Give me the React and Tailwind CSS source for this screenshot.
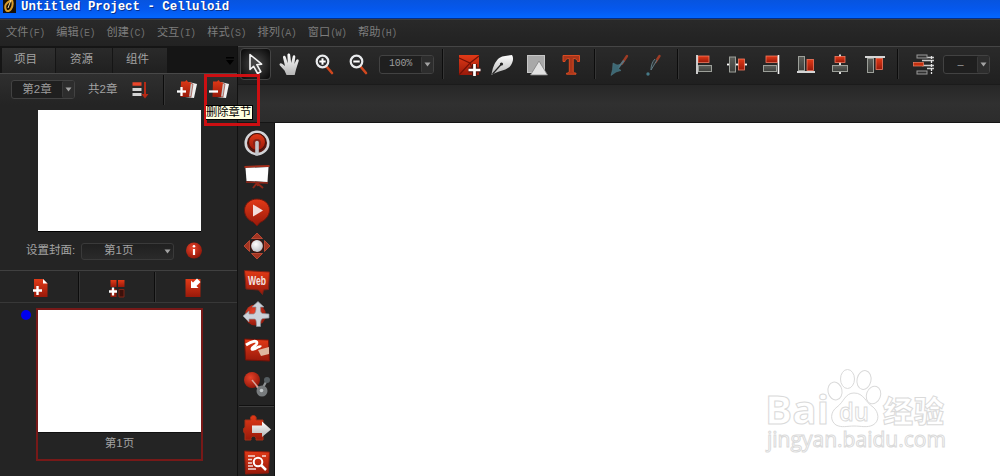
const menus = [
  ['文件', '(F)'],
  ['编辑', '(E)'],
  ['创建', '(C)'],
  ['交互', '(I)'],
  ['样式', '(S)'],
  ['排列', '(A)'],
  ['窗口', '(W)'],
  ['帮助', '(H)'],
];

function Defs() {
  return (
    <svg width="0" height="0" className="absolute">
      <defs>
        <linearGradient id="red" x1="0" y1="0" x2="0" y2="1">
          <stop offset="0" stopColor="#e23a17" />
          <stop offset="1" stopColor="#98190a" />
        </linearGradient>
        <linearGradient id="silver" x1="0" y1="0" x2="0" y2="1">
          <stop offset="0" stopColor="#ffffff" />
          <stop offset="1" stopColor="#b5b5b5" />
        </linearGradient>
        <linearGradient id="gray" x1="0" y1="0" x2="0" y2="1">
          <stop offset="0" stopColor="#5c5e5a" />
          <stop offset="1" stopColor="#3d3f3c" />
        </linearGradient>
        <radialGradient id="ball" cx=".4" cy=".35" r=".7">
          <stop offset="0" stopColor="#e8432a" />
          <stop offset="1" stopColor="#8d1508" />
        </radialGradient>
        <radialGradient id="pearl" cx=".4" cy=".35" r=".7">
          <stop offset="0" stopColor="#ffffff" />
          <stop offset="1" stopColor="#b9bec4" />
        </radialGradient>
      </defs>
    </svg>
  );
}

// every toolbar icon lives on a 34x34 grid
function Icon({ children }) {
  return (
    <svg width="34" height="34" viewBox="0 0 34 34" fill="none" className="shrink-0">
      {children}
    </svg>
  );
}

function SmallIcon({ children }) {
  return (
    <svg width="22" height="22" viewBox="0 0 22 22" fill="none" className="shrink-0">
      {children}
    </svg>
  );
}

function Separator() {
  return <div className="h-[30px] w-[2px] shrink-0 border-l border-[#0c0c0c] bg-[#353535]" />;
}

function Arrow() {
  return (
    <svg width="7" height="5" viewBox="0 0 7 5">
      <path d="M.5 .5h6l-3 4z" fill="#a3a3a3" />
    </svg>
  );
}

function Select({ className, children }) {
  return (
    <div className={`flex shrink-0 items-stretch rounded-[3px] border border-[#424242] bg-[#1f1f1f] leading-none text-[#9c9c9c] ${className}`}>
      <span className="flex flex-1 items-center justify-center">{children}</span>
      <span className="flex w-[12px] items-center justify-center rounded-[2px] border-l border-[#3a3a3a] bg-[#2d2d2d]">
        <Arrow />
      </span>
    </div>
  );
}

function MagnifierIcon({ plus }) {
  return (
    <Icon>
      <path d="M19.5 19.5l5.5 6.5" stroke="#d0471e" strokeWidth="2.6" strokeLinecap="round" />
      <circle cx="15.5" cy="14.5" r="5.8" fill="#29292a" stroke="#e9ebed" strokeWidth="2.2" />
      <path d="M12.3 14.5h6.4" stroke="#fff" strokeWidth="2" />
      {plus && <path d="M15.5 11.3v6.4" stroke="#fff" strokeWidth="2" />}
    </Icon>
  );
}

function Toolbar() {
  return (
    <div className="flex h-[38px] items-center border-t border-[#454545] bg-linear-to-b from-[#2a2a2a] to-[#202020] pb-[3px] pl-[2px]">
      <div className="flex h-[32px] w-[31px] shrink-0 items-center justify-center rounded-[4px] border border-[#444] bg-radial from-[#4b4b4b] to-[#080808]">
        <svg width="29" height="30" viewBox="0 0 29 30" fill="none">
          <path d="M9 5.5v15l3.6-3.2 4 7.2 3.2-1.8-4-7 4.8-.6z" fill="#454545" stroke="#f5f5f5" strokeWidth="1.6" strokeLinejoin="round" />
        </svg>
      </div>
      <div className="w-[2px] shrink-0" />
      <Icon>
        <path d="M13.5 28l-2-4.5-4.6-5c-1.3-1.8.8-3 2.3-1.7l2.8 2.2-2-8.5c-.2-2 2.1-2.3 2.7-.5l2.1 6.3-.4-8.3c.1-2 2.6-2 2.8 0l1 8 1.5-6.5c.6-1.8 2.7-1.3 2.6.5l-.9 7 1.9-4c1-1.5 2.800-.6 2.400 1l-2.700 8.500-1.300 5.500z" fill="url(#silver)" />
      </Icon>
      <MagnifierIcon plus />
      <MagnifierIcon />
      <Select className="ml-[4px] h-[19px] w-[55px] font-['Liberation_Mono'] text-[10px] tracking-[-0.300px]">100%</Select>
      <div className="w-[8px] shrink-0" />
      <Separator />
      <div className="w-[8px] shrink-0" />
      <Icon>
        <rect x="7" y="8" width="20" height="20" fill="url(#red)" />
        <path d="M7 11l11 5 9-7M7 28l11-12 5 12" stroke="#741006" strokeWidth="1.2" />
        <path d="M22.5 17v12M16.5 23h12" stroke="#4a1510" strokeWidth="5" />
        <path d="M22.5 17v12M16.5 23h12" stroke="#fff" strokeWidth="2.7" />
      </Icon>
      <Icon>
        <path d="M5.5 28c1-6 2-11 6.5-16 4-3.400 9-3 14-4 2 3 1.200 8-2.500 12C18.500 24 11 24 5.500 28z" fill="url(#silver)" />
        <path d="M6.5 27l9-10" stroke="#222" strokeWidth="1.2" />
        <circle cx="15.5" cy="17" r="1.6" fill="#222" />
      </Icon>
      <Icon>
        <rect x="7.5" y="8.5" width="17" height="17" fill="#a9a9a9" stroke="#c6c6c6" />
        <path d="M19 14l8.5 14h-17z" fill="#e2e2e2" stroke="#808080" strokeWidth=".8" />
      </Icon>
      <Icon>
        <path d="M9 8.5h16.5v6h-2c-.4-2-1.3-3-4.3-3V24c0 1.5.8 2 2.8 2.2v1h-9.5v-1c2-.2 2.8-.7 2.8-2.2V11.5c-3 0-3.9 1-4.3 3H9z" fill="#a9351a" stroke="#d94b22" />
      </Icon>
      <div className="w-[6px] shrink-0" />
      <Separator />
      <div className="w-[7px] shrink-0" />
      <Icon>
        <path d="M19 16.5l5-7.5" stroke="#9f3c25" strokeWidth="2.4" strokeLinecap="round" />
        <path d="M15 21l6-7.5" stroke="#557884" strokeWidth="2" />
        <path d="M10 16l4 2 3-.5-1.5 4 2.5 2-5 1.5-5 3.5 1.5-6z" fill="#3d6874" stroke="#527f8b" strokeWidth=".5" />
      </Icon>
      <Icon>
        <path d="M18.5 15l4-6" stroke="#9f3c25" strokeWidth="2.4" strokeLinecap="round" />
        <path d="M20 13l-6 10c0-4 1-8 4-11" fill="#2e3335" stroke="#67828b" strokeWidth=".9" />
        <circle cx="11" cy="27" r="1.7" fill="#467987" />
      </Icon>
      <div className="w-[6px] shrink-0" />
      <Separator />
      <div className="w-[8px] shrink-0" />
      <Icon>
        <rect x="11" y="9" width="11" height="6.5" fill="url(#red)" stroke="#f07a61" strokeWidth=".8" />
        <rect x="11.5" y="18.5" width="13" height="6" fill="url(#gray)" stroke="#9c9f99" />
        <path d="M10 8v19" stroke="#f6f6f6" strokeWidth="1.6" />
      </Icon>
      <Icon>
        <path d="M6 17.5h20" stroke="#fff" strokeWidth="1.8" />
        <rect x="8.5" y="10" width="6" height="15" fill="url(#gray)" stroke="#9c9f99" />
        <rect x="17.5" y="12" width="6" height="11" fill="url(#red)" stroke="#f07a61" strokeWidth=".8" />
      </Icon>
      <Icon>
        <rect x="11" y="9" width="11.5" height="6.5" fill="url(#red)" stroke="#f07a61" strokeWidth=".8" />
        <rect x="8.5" y="18.5" width="13" height="6" fill="url(#gray)" stroke="#9c9f99" />
        <path d="M23.5 8v19" stroke="#f6f6f6" strokeWidth="1.6" />
      </Icon>
      <Icon>
        <rect x="9.5" y="9.5" width="6" height="14" fill="url(#gray)" stroke="#9c9f99" />
        <rect x="18" y="12.5" width="6.5" height="11" fill="url(#red)" stroke="#f07a61" strokeWidth=".8" />
        <path d="M8 25h18" stroke="#f6f6f6" strokeWidth="1.7" />
      </Icon>
      <Icon>
        <path d="M17 7.5V27" stroke="#fff" strokeWidth="1.7" />
        <rect x="12" y="9.5" width="10" height="6" fill="url(#red)" stroke="#f07a61" strokeWidth=".8" />
        <rect x="9.5" y="18.5" width="15" height="6" fill="url(#gray)" stroke="#9c9f99" />
      </Icon>
      <Icon>
        <rect x="10.5" y="11.5" width="6" height="14" fill="url(#gray)" stroke="#9c9f99" />
        <rect x="19" y="11.5" width="6.5" height="11" fill="url(#red)" stroke="#f07a61" strokeWidth=".8" />
        <path d="M8 10h20" stroke="#f6f6f6" strokeWidth="1.7" />
      </Icon>
      <div className="w-[6px] shrink-0" />
      <Separator />
      <div className="w-[8px] shrink-0" />
      <Icon>
        <path d="M20 10.5h7M15 13.5h12M20 21.5h7M15 18.5h12" stroke="#c9c9c9" strokeWidth="1.3" />
        <path d="M24.5 9v18" stroke="#e6e6e6" strokeDasharray="3 1" strokeWidth="1.3" />
        <rect x="10" y="8" width="10" height="3" fill="#303030" stroke="#9a9a9a" />
        <rect x="6.5" y="15.5" width="10" height="3.5" fill="#c5300f" stroke="#ef8066" strokeWidth=".7" />
        <rect x="10" y="24" width="10" height="3" fill="#303030" stroke="#9a9a9a" />
      </Icon>
      <Select className="ml-[2px] h-[19px] w-[47px] font-['Liberation_Sans'] text-[11px]">–</Select>
    </div>
  );
}

function ToolStrip() {
  return (
    <div className="flex h-[353px] w-[37px] shrink-0 flex-col items-center overflow-hidden border-r border-[#111] bg-[#232323] pt-[3px] pl-px">
      <div className="flex h-[275px] shrink-0 flex-col justify-between">
        <Icon>
          <circle cx="17" cy="17" r="11.3" fill="#5a1a12" stroke="#d3d5d8" strokeWidth="2.5" />
          <circle cx="17" cy="16" r="8.5" fill="url(#red)" stroke="#401009" />
          <circle cx="17" cy="17" r="4" fill="#8b2316" />
          <path d="M17 16.5V28" stroke="#c3c6ca" strokeWidth="3.6" strokeLinecap="round" />
        </Icon>
        <Icon>
          <path d="M4.5 7l25-1" stroke="#a62f1c" strokeWidth="2" />
          <path d="M5.5 8l23-1-1 15-21-1z" fill="#fff" />
          <path d="M6 22l22 1" stroke="#94291b" strokeWidth="1.6" />
          <path d="M17 23l-4 5M17 23l6 5M17 23l1 3" stroke="#8f2819" strokeWidth="2" />
        </Icon>
        <Icon>
          <path d="M17 4c7 0 12.5 4.5 12.5 11S24 26 20 27.5L17 31l-4-4C8 25 4.5 21 4.5 15S10 4 17 4z" fill="url(#red)" stroke="#6f170d" />
          <path d="M13 9.5l10 6-10 6z" fill="#f2dedb" />
        </Icon>
        <Icon>
          <path d="M17 4l5.5 5.5h-11zM17 30l5.5-5.5h-11zM4 17l5.5-5.5v11zM30 17l-5.5-5.5v11z" fill="#a23421" stroke="#cb5139" strokeWidth=".8" />
          <circle cx="17" cy="17" r="7" fill="#45100a" />
          <circle cx="17" cy="17" r="5.9" fill="url(#pearl)" />
        </Icon>
        <Icon>
          <path d="M4.5 6.5L29.5 8l-1 17.500-5 .5-1 4.500-4-4.500-12.500-1z" fill="url(#red)" stroke="#792015" />
          <text x="17" y="21" textAnchor="middle" textLength="18" lengthAdjust="spacingAndGlyphs" fill="#f3e4e1" fontFamily="Liberation Sans" fontWeight="bold" fontSize="12">Web</text>
        </Icon>
        <Icon>
          <circle cx="15.5" cy="17" r="10.5" fill="url(#ball)" />
          <path d="M18 3.500l6 5.500h-3.500c-.2 4 0 6 2 6.500l6.500 .5v4l-6 .5c-2 .5-2.500 2-2.500 8h-4c0-6-.5-7.500-2.500-7.500H9v3l-6-6 6-5v3h4.500c2-.5 2.500-3 2.500-7h-4z" fill="#ccd2d9" stroke="#8c939b" strokeWidth=".7" />
        </Icon>
        <Icon>
          <path d="M4.5 6l24 1 1 21-24-1z" fill="url(#red)" stroke="#711208" />
          <path d="M6 12c6-4 11-5 11-2s-6 4-5 6 7-4 9-2" stroke="#fff" strokeWidth="2.8" />
          <path d="M18 17l11-3v7l-8 2z" fill="#dfb69e" />
        </Icon>
        <Icon>
          <path d="M12 14l9 10 6-11" stroke="#8e9294" strokeWidth="2.2" />
          <circle cx="12" cy="13" r="8" fill="url(#ball)" />
          <path d="M12 13l9 11" stroke="#d7a59c" strokeWidth="1.5" />
          <circle cx="22" cy="24" r="5.5" fill="#777b7d" />
          <circle cx="21.5" cy="23.5" r="1.8" fill="#c3c8ca" />
          <circle cx="27" cy="13" r="3" fill="#555d61" />
        </Icon>
      </div>
      <div className="mt-[4px] h-[2px] w-full shrink-0 border-t border-[#111] bg-[#3d3d3d]" />
      <div className="mt-[5px] shrink-0">
        <Icon>
          <path d="M5 8h6c-3-5.500 7-6.500 5 0h7v6c6-2 6 6 0 5v9h-7c1-5-6-5-5 0H5v-7c-2 1-2-7 0-5z" fill="url(#red)" stroke="#a53016" />
          <path d="M12 13.5h10v-4l9 8-9 7.500v-4H12z" fill="url(#silver)" />
        </Icon>
        <Icon>
          <path d="M4.5 5L29.5 6l-1 21-23 1z" fill="url(#red)" stroke="#851a0e" />
          <path d="M8 10h7M8 13.5h4M8 17h4M8 20h5M8 23h8M22 10h4" stroke="#f4dad6" strokeWidth="1.5" />
          <circle cx="18" cy="16" r="4.3" stroke="#fff" strokeWidth="2" />
          <path d="M21 19l5 5" stroke="#fff" strokeWidth="2.5" />
        </Icon>
      </div>
    </div>
  );
}

function ChapterIcon({ plus }) {
  return (
    <SmallIcon>
      <path d="M13 3l8 2-3 14-9-1z" fill="#f1f1f1" />
      <path d="M11 3l6 2-2 13-7-2z" fill="#c6c6c6" stroke="#8d2a1c" strokeWidth=".6" />
      <path d="M5 2.5h4L10.500 1l1.500 2 3 .5-2 14.500H4.500z" fill="url(#red)" />
      <path d="M1 12.5h9" stroke="#fff" strokeWidth="2.3" />
      {plus && <path d="M5.500 8v9" stroke="#fff" strokeWidth="2.3" />}
    </SmallIcon>
  );
}

function ProjectPanel() {
  return (
    <aside className="flex h-[430px] w-[238px] shrink-0 flex-col border-r border-[#111] bg-[#242424] text-[#a3a3a3]">
      <div className="flex h-[27px] bg-[#151515] pt-[2px] pl-[2px] text-[11.5px] leading-[22px]">
        <div className="w-[54px] border-r border-[#151515] bg-linear-to-b from-[#303030] to-[#242424] pl-[12px]">项目</div>
        <div className="w-[57px] border-r border-[#151515] bg-linear-to-b from-[#2a2a2a] to-[#202020] pl-[14px]">资源</div>
        <div className="w-[54px] bg-linear-to-b from-[#2a2a2a] to-[#202020] pl-[13px]">组件</div>
        <svg width="8" height="9" viewBox="0 0 8 9" className="mt-[9px] ml-[59px]">
          <path d="M0 0h8v1.5H0zM0 3h8L4 8z" fill="#000" />
        </svg>
      </div>

      <div className="flex h-[32px] items-center border-t border-[#484848] bg-linear-to-b from-[#2f2f2f] to-[#242424] pl-[11px] text-[11.5px] whitespace-nowrap">
        <Select className="h-[19px] w-[64px] text-[11.5px]">第2章</Select>
        <span className="ml-[13px] w-[40px] leading-none">共2章</span>
        <SmallIcon>
          <path d="M4.5 5h9" stroke="#e9452a" strokeWidth="3.5" />
          <path d="M4.5 10.5h9M4.5 15.5h9" stroke="#d3d3d3" strokeWidth="2.8" />
          <path d="M17 3v13" stroke="#b52a16" strokeWidth="2" />
          <path d="M13.5 15h7L17 19.5z" fill="#b52a16" />
        </SmallIcon>
        <div className="ml-[13px]"><Separator /></div>
        <div className="ml-[11px]"><ChapterIcon plus /></div>
        <div className="ml-[10px]"><ChapterIcon /></div>
      </div>

      <div className="mt-[5px] ml-[38px] h-[122px] w-[163px] border-b border-black bg-white" />

      <div className="flex h-[38px] items-center pl-[26px] text-[11.5px] leading-none">
        <span className="w-[55px] whitespace-nowrap">设置封面:</span>
        <div className="flex h-[17px] w-[93px] items-center justify-between rounded-[3px] border border-[#3a3a3a] bg-linear-to-b from-[#202020] to-[#2a2a2a] pr-[2px] pl-[22px]">
          第1页
          <Arrow />
        </div>
        <svg width="18" height="18" viewBox="0 0 18 18" className="ml-[11px]">
          <circle cx="9" cy="8.5" r="8" fill="url(#ball)" />
          <path d="M9 7v6" stroke="#fff" strokeWidth="2.2" />
          <circle cx="9" cy="4.3" r="1.3" fill="#fff" />
        </svg>
      </div>

      <div className="flex h-[33px] items-center border-t border-b border-t-[#404040] border-b-[#383838]">
        <div className="flex w-[78px] justify-center pt-[2px] pl-[2px]">
          <SmallIcon>
            <path d="M5 2h9l4.5 4.5V20H5z" fill="url(#red)" />
            <path d="M14 2v4.5h4.5z" fill="#fff" />
            <path d="M8.5 9v9M4 13.5h9" stroke="#fff" strokeWidth="2.4" />
          </SmallIcon>
        </div>
        <Separator />
        <div className="flex w-[74px] justify-center pt-[2px]">
          <SmallIcon>
            <path d="M4.5 3h6v7h-6zM12 3h6.5v7H12z" fill="url(#red)" />
            <path d="M4.5 12h6v8h-6z" fill="#91180a" />
            <path d="M13 12.5h5V20h-5z" fill="#3c110b" stroke="#7e2416" />
            <path d="M7 10.5v8M3 14.5h8" stroke="#fff" strokeWidth="2.3" />
          </SmallIcon>
        </div>
        <Separator />
        <div className="flex w-[74px] justify-center pt-[2px]">
          <SmallIcon>
            <path d="M3.5 2h15v18h-15z" fill="url(#red)" />
            <path d="M15 1.5l3.5 3.5-4 4 2 2H9V3.5l2 2z" fill="#fff" />
          </SmallIcon>
        </div>
      </div>

      <div className="flex pt-[5px]">
        <div className="mt-[2px] ml-[21px] size-[10px] rounded-full bg-[#0000ee]" />
        <div className="ml-[5px] h-[153px] w-[167px] border-2 border-[#771918]">
          <div className="h-[123px] border-b border-[#111] bg-white" />
          <div className="text-center text-[11.5px] leading-[21px]">第1页</div>
        </div>
      </div>
    </aside>
  );
}

function Watermark() {
  return (
    <svg width="190" height="96" viewBox="0 0 190 96" fill="#fff" stroke="#dadada" strokeWidth="1" fontFamily="Open Sans">
      <text x="2" y="58" fontSize="40" fontWeight="bold" textLength="64" lengthAdjust="spacingAndGlyphs">Bai</text>
      <ellipse cx="72" cy="25" rx="7" ry="9" transform="rotate(-12 72 25)" />
      <ellipse cx="84.5" cy="13" rx="7" ry="9.5" />
      <ellipse cx="101" cy="14" rx="7" ry="9.5" transform="rotate(12 101 14)" />
      <ellipse cx="110.5" cy="29" rx="7" ry="9" transform="rotate(20 110.5 29)" />
      <path d="M91 27c-9 0-10 9-17 14-7 5-7 14-1 18 6 3 11 1 18 1s13 2 19-1c7-4 6-13 0-18-8-5-9-14-19-14z" />
      <text x="76" y="55" fontSize="26" fontWeight="600" textLength="30" lengthAdjust="spacingAndGlyphs">du</text>
      <text x="120" y="56" fontSize="30" fontWeight="900" textLength="61" fontFamily="Noto Sans CJK SC">经验</text>
      <text x="4" y="81" fontSize="21" textLength="179" lengthAdjust="spacingAndGlyphs">jingyan.baidu.com</text>
    </svg>
  );
}

export default function App() {
  return (
    <div className="relative h-[476px] w-[1000px] overflow-hidden bg-[#242424] font-['Liberation_Sans','Noto_Sans_CJK_SC',sans-serif]">
      <Defs />
      <header className="flex h-[19px] border-b border-[#062f87] bg-linear-to-b from-[#0754df] via-[#0558ed] to-[#0367ff] pl-[3px]">
        <svg width="13" height="14" viewBox="0 0 13 14">
          <path d="M0 0h13v13H0z" fill="#171008" />
          <path d="M9 0C3 2 1 6 3 10c1 2 4 1 5-1 2-3 2-6 1-9z" stroke="#d79b2b" strokeWidth="2" fill="none" />
          <path d="M8 0L5 8" stroke="#f6e09d" />
        </svg>
        <h1 className="ml-[5px] font-['Liberation_Mono'] text-[12.4px] leading-[14px] font-bold whitespace-nowrap text-white [text-shadow:1px_1px_0_#05308f]">
          Untitled Project - Celluloid
        </h1>
      </header>

      <nav className="flex h-[27px] items-center border-t border-[#3c3c3c] bg-linear-to-b from-[#292929] to-[#222] pl-[6px] text-[11.2px] text-[#7d7d7d]">
        {menus.map(([label, key]) => (
          <span key={key} className="w-[50.3px] leading-none whitespace-nowrap">
            {label}
            <span className="font-['Liberation_Mono'] text-[10px] tracking-[-0.6px] text-[#707070]">{key}</span>
          </span>
        ))}
      </nav>

      <div className="flex">
        <ProjectPanel />
        <div className="w-[762px]">
          <Toolbar />
          <div className="h-[39px] border-t border-b border-t-[#1b1b1b] border-b-[#151515] bg-linear-to-b from-[#272727] via-[#303030] to-[#2c2c2c]" />
          <div className="flex">
            <ToolStrip />
            <main className="flex h-[353px] flex-1 items-end justify-end bg-white pr-[47px] pb-[14px]">
              <Watermark />
            </main>
          </div>
        </div>
      </div>

      {/* highlighted delete-chapter button and its tooltip */}
      <div className="absolute top-[74px] left-[204px] h-[52px] w-[56px] border-3 border-[#cc0f12]" />
      <div className="absolute top-[105px] left-[206px] flex h-[15px] w-[47px] items-center border border-l-0 border-black bg-[#ffffe1] text-[11.3px] leading-none whitespace-nowrap text-black">
        删除章节
      </div>
    </div>
  );
}
